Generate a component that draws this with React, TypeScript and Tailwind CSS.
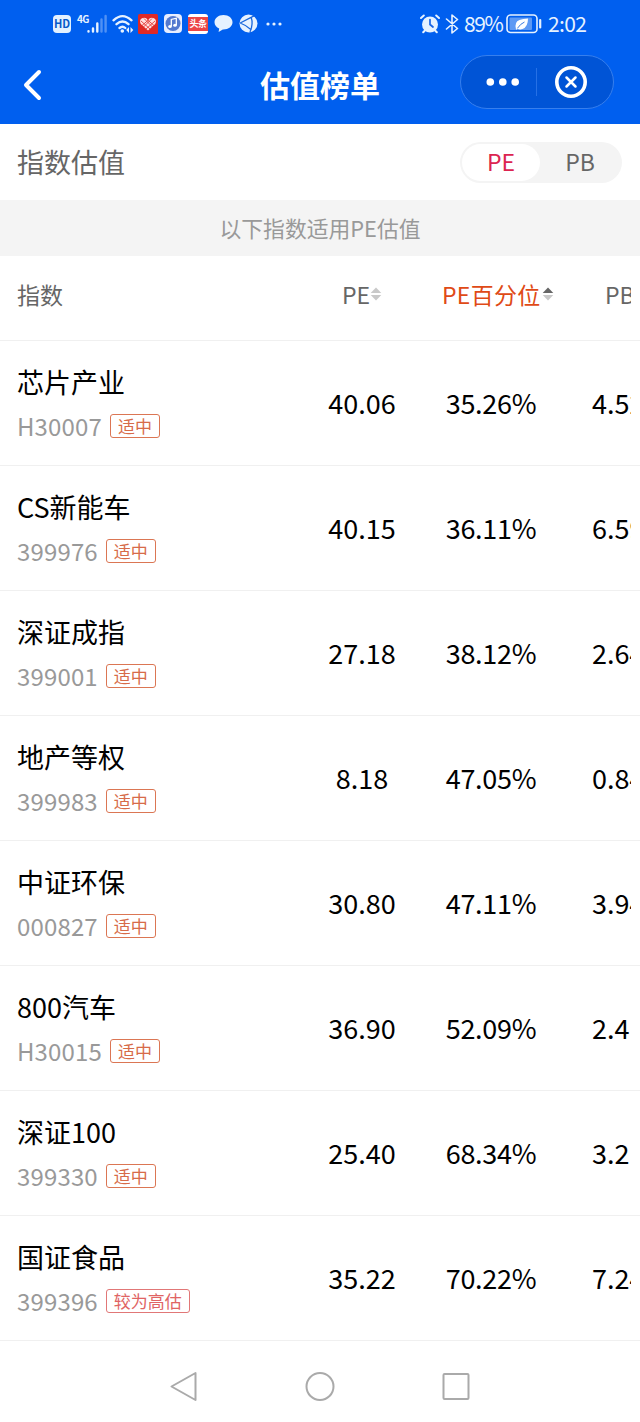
const rows = [
    { name: "芯片产业", code: "H30007", tag: "适中", pe: "40.06", percent: "35.26%", pb: "4.52" },
    { name: "CS新能车", code: "399976", tag: "适中", pe: "40.15", percent: "36.11%", pb: "6.59" },
    { name: "深证成指", code: "399001", tag: "适中", pe: "27.18", percent: "38.12%", pb: "2.64" },
    { name: "地产等权", code: "399983", tag: "适中", pe: "8.18", percent: "47.05%", pb: "0.84" },
    { name: "中证环保", code: "000827", tag: "适中", pe: "30.80", percent: "47.11%", pb: "3.94" },
    { name: "800汽车", code: "H30015", tag: "适中", pe: "36.90", percent: "52.09%", pb: "2.4" },
    { name: "深证100", code: "399330", tag: "适中", pe: "25.40", percent: "68.34%", pb: "3.2" },
    { name: "国证食品", code: "399396", tag: "较为高估", high: true, pe: "35.22", percent: "70.22%", pb: "7.24" },
]

function SortIcon({ active = false }: { active?: boolean }) {
    return (
        <svg width="12" height="14" viewBox="0 0 12 14" className="shrink-0">
            <path d="M6 0.5 11.3 6H0.7Z" fill={active ? "#666" : "#c9c9c9"} />
            <path d="M6 13.5 11.3 8H0.7Z" fill="#c9c9c9" />
        </svg>
    )
}

function StatusBar() {
    return (
        <div className="flex h-[47px] items-center pl-[53px] text-[#e6f2ff]">
            <div className="flex h-[18px] w-[18px] shrink-0 items-center justify-center rounded-[4px] bg-[#e3f1ff] text-[11px] font-bold text-[#0759c9]">HD</div>
            <div className="ml-[6px] h-[20px] w-[11px] shrink-0 text-[10px] leading-[10px] font-bold tracking-[-0.7px]">4G</div>
            <svg width="20" height="20" viewBox="0 0 20 20" fill="none" stroke="currentColor" strokeWidth="2.4" strokeLinecap="round" className="-ml-px shrink-0">
                <path d="M1.5 17.5v-.4M6 17.5v-3M10.3 17.5V9.5" />
                <path d="M14.5 17.5V5.5M18.6 17.5V2" opacity=".35" />
            </svg>
            <svg width="22" height="20" viewBox="0 0 22 20" fill="none" stroke="currentColor" strokeWidth="2.3" strokeLinecap="round" className="ml-[5px] shrink-0">
                <path d="M1.5 6.3Q10.5-2 19.5 6.3M4.5 10.2Q10.5 4.8 16.5 10.2M7.5 14Q10.5 11.5 13.3 14" />
                <circle cx="10.3" cy="17" r="1.8" fill="currentColor" stroke="none" />
                <path d="m17 13-2.8 3 2.8 3zM18.5 13l2.8 3-2.8 3z" fill="currentColor" stroke="none" />
            </svg>
            <svg width="20" height="20" viewBox="0 0 20 20" className="ml-[4px] shrink-0">
                <rect width="20" height="20" rx="1.5" fill="#df2925" />
                <path d="M10 16.5 2.8 10Q.8 6.3 4 4.3 7.5 2.8 10 6q2.5-3.2 6-1.7 3.2 2 1.2 5.7Z" fill="#ffe0df" />
                <path d="m3 7 9 8M6 4.5l8.5 8.5M9 5.5l7 6M17 7l-9 8M14 4.5 5.5 13M11 5.5l-7 6" stroke="#df2925" strokeWidth=".8" />
            </svg>
            <svg width="18" height="19" viewBox="0 0 18 19" fill="none" className="ml-[6px] shrink-0">
                <rect width="18" height="19" rx="4" fill="#e7edff" />
                <circle cx="9" cy="9.5" r="7.5" fill="#5378cf" />
                <path d="M7.3 12.2V5.4l5-1.2v6.9" stroke="white" strokeWidth="1.3" />
                <ellipse cx="6" cy="12.4" rx="1.8" ry="1.5" fill="white" />
                <ellipse cx="11" cy="11.3" rx="1.8" ry="1.5" fill="white" />
            </svg>
            <div className="ml-[6px] flex h-[20px] w-[20px] shrink-0 items-center justify-center rounded-[3px] border-y-[3px] border-white bg-[#ec4646] text-[9px] leading-none font-bold tracking-[-0.5px] whitespace-nowrap text-white">头条</div>
            <svg width="19" height="19" viewBox="0 0 19 19" className="ml-[6px] shrink-0">
                <path d="M9.5 1C4.2 1 .5 4.3.5 8.2c0 3 2 5.1 4.7 6.3L4.6 18l4.2-2.6c5.6.2 9.7-3 9.7-7.2C18.5 4.2 14.7 1 9.5 1Z" fill="currentColor" />
            </svg>
            <svg width="19" height="19" viewBox="0 0 19 19" fill="none" className="ml-[6px] shrink-0">
                <circle cx="9.5" cy="9.5" r="9" fill="currentColor" />
                <path d="M1.2 9 15 1.8M12.2 3.2Q14.5 10 11 18M1.2 9Q7 11 12.5 16" stroke="#1967dc" strokeWidth="1.3" />
            </svg>
            <svg width="16" height="6" viewBox="0 0 16 6" fill="currentColor" className="ml-[8px] shrink-0">
                <circle cx="2" cy="3" r="1.6" />
                <circle cx="8" cy="3" r="1.6" />
                <circle cx="14" cy="3" r="1.6" />
            </svg>

            <div className="ml-auto flex items-center pr-[52px]">
                <svg width="20" height="20" viewBox="0 0 20 20" fill="none" stroke="currentColor" strokeLinecap="round">
                    <circle cx="10" cy="10.5" r="8" fill="currentColor" stroke="none" />
                    <path d="M1 4 3.8 1.5M19 4l-2.8-2.5M3.2 18.2l1.5-1.5M16.8 18.2l-1.5-1.5" strokeWidth="2" />
                    <path d="M10 5.5v5l3 2.5" stroke="#1764e5" strokeWidth="1.7" />
                </svg>
                <svg width="14" height="20" viewBox="0 0 14 20" fill="none" stroke="currentColor" strokeWidth="1.6" strokeLinejoin="round" strokeLinecap="round" className="ml-[5px]">
                    <path d="m1.5 5 11 9.5L7 19V1l5.5 4.5-11 9.5" />
                </svg>
                <span className="ml-[5px] w-[40px] text-[21px] tracking-[-1.4px]">89%</span>
                <svg width="37" height="20" viewBox="0 0 37 20" fill="none" className="ml-[2px]">
                    <rect x="1" y="1" width="30" height="17.5" rx="3.5" stroke="currentColor" strokeWidth="1.6" />
                    <rect x="3.5" y="3.5" width="22.5" height="12.5" rx="1" fill="#5d99f4" />
                    <path d="M10 15.5Q8 8 13.5 6 17 4.5 22 4.5 22 13 16.5 15 13.5 16 11.5 14.5L10 16Z" fill="white" />
                    <path d="M11.5 14.2q3-4.5 7-6.2" stroke="#3979df" strokeWidth="1" />
                    <path d="M34.2 6v7.5" stroke="currentColor" strokeWidth="2.2" strokeLinecap="round" />
                </svg>
                <span className="ml-[5px] w-[40px] text-[21px] tracking-[-0.6px]">2:02</span>
            </div>
        </div>
    )
}

function Header() {
    return (
        <header className="h-[124px] bg-[#005fef]">
            <StatusBar />
            <div className="grid h-[77px] grid-cols-3 items-start pt-2">
                <svg width="22" height="32" viewBox="0 0 22 32" fill="none" stroke="white" strokeWidth="4" strokeLinecap="round" strokeLinejoin="round" className="mt-[14px] ml-[22px]">
                    <path d="M17 3 4 16l13 13" />
                </svg>
                <h1 className="mt-[7px] text-center text-[30px] leading-[44px] font-bold text-white">估值榜单</h1>
                <div className="mr-[26px] flex h-[54px] w-[154px] items-center justify-self-end rounded-full border border-[#377fed] bg-[#0054d6]">
                    <svg width="34" height="10" viewBox="0 0 34 10" fill="white" className="ml-[25px]">
                        <circle cx="4.3" cy="5" r="3.8" />
                        <circle cx="16.8" cy="5" r="3.8" />
                        <circle cx="29.2" cy="5" r="3.8" />
                    </svg>
                    <div className="ml-[16px] h-7 w-px bg-[#2670e5]" />
                    <svg width="34" height="34" viewBox="0 0 34 34" fill="none" stroke="white" strokeLinecap="round" className="ml-[17px]">
                        <circle cx="17" cy="17" r="14.2" strokeWidth="3.6" />
                        <path d="m12.5 12.5 9 9m0-9-9 9" strokeWidth="2.5" />
                    </svg>
                </div>
            </div>
        </header>
    )
}

export default function App() {
    return (
        <main className="h-[1422px] w-[640px] overflow-hidden bg-white font-['Noto_Sans_CJK_SC',sans-serif] text-black">
            <Header />
            <section className="flex h-[76px] items-center justify-between pr-[18px] pl-[17px] text-[#666]">
                <h2 className="text-[27px] leading-[40px]">指数估值</h2>
                <div className="flex h-[41px] w-[162px] rounded-full bg-[#f4f4f4] p-[2px] text-[23px] leading-[35px]">
                    <button className="w-[78px] rounded-full bg-white pb-[2px] text-[#dc2450]">PE</button>
                    <button className="flex-1 pb-[2px]">PB</button>
                </div>
            </section>
            <div className="h-14 bg-[#f4f4f4] text-center text-[21.8px] leading-[55px] text-[#999]">以下指数适用PE估值</div>

            <div className="mr-[9px] overflow-hidden">
                <div className="flex h-[84px] items-center pb-[8px] text-[23px] text-[#666]">
                    <div className="w-[298px] shrink-0 pl-[17px]">指数</div>
                    <div className="flex w-[128px] shrink-0 items-center justify-center"><span>PE</span><SortIcon /></div>
                    <div className="flex w-[130px] shrink-0 items-center pl-[16px] text-[#df4a16]">
                        <span className="w-[100px] shrink-0 tracking-[0.3px] whitespace-nowrap">PE百分位</span><SortIcon active />
                    </div>
                    <div className="w-[84px] shrink-0 pl-[49px]">PB</div>
                </div>
            </div>

            {rows.map((row) => (
                <div key={row.code} className="h-[125px] border-t border-[#f0f0f0] pr-[9px]">
                    <div className="flex h-full items-center overflow-hidden">
                        <div className="w-[298px] shrink-0 pl-[17px]">
                            <div className="text-[27px] leading-[40px]">{row.name}</div>
                            <div className="mt-[6px] flex h-[36px] items-center gap-2">
                                <span className="text-[24px] tracking-[0.15px] text-[#999]">{row.code}</span>
                                <span className={`h-6 rounded-[3px] border px-[7px] text-[17px] leading-[21px] ${row.high ? "border-[#e17777] text-[#e06464]" : "border-[#db7654] text-[#d76b49]"}`}>{row.tag}</span>
                            </div>
                        </div>
                        <div className="w-[128px] shrink-0 text-center text-[27px]">{row.pe}</div>
                        <div className="w-[130px] shrink-0 text-center text-[27px] tracking-[-0.3px]">{row.percent}</div>
                        <div className="w-[84px] shrink-0 pl-[36px] text-[27px]">{row.pb}</div>
                    </div>
                </div>
            ))}

            <nav className="flex h-[82px] items-center justify-center gap-[106px] border-t border-[#f0f0f0] pt-[10px]">
                <svg width="30" height="32" viewBox="0 0 30 32" fill="none" stroke="#aaa" strokeWidth="2" strokeLinejoin="round">
                    <path d="M26.5 2v27L2.5 15.5Z" />
                </svg>
                <svg width="30" height="30" viewBox="0 0 30 30" fill="none" stroke="#aaa" strokeWidth="2">
                    <circle cx="15" cy="14.5" r="13.5" />
                </svg>
                <svg width="30" height="30" viewBox="0 0 30 30" fill="none" stroke="#aaa" strokeWidth="2">
                    <rect x="2.5" y="2" width="25" height="25" rx="1" />
                </svg>
            </nav>
        </main>
    )
}
